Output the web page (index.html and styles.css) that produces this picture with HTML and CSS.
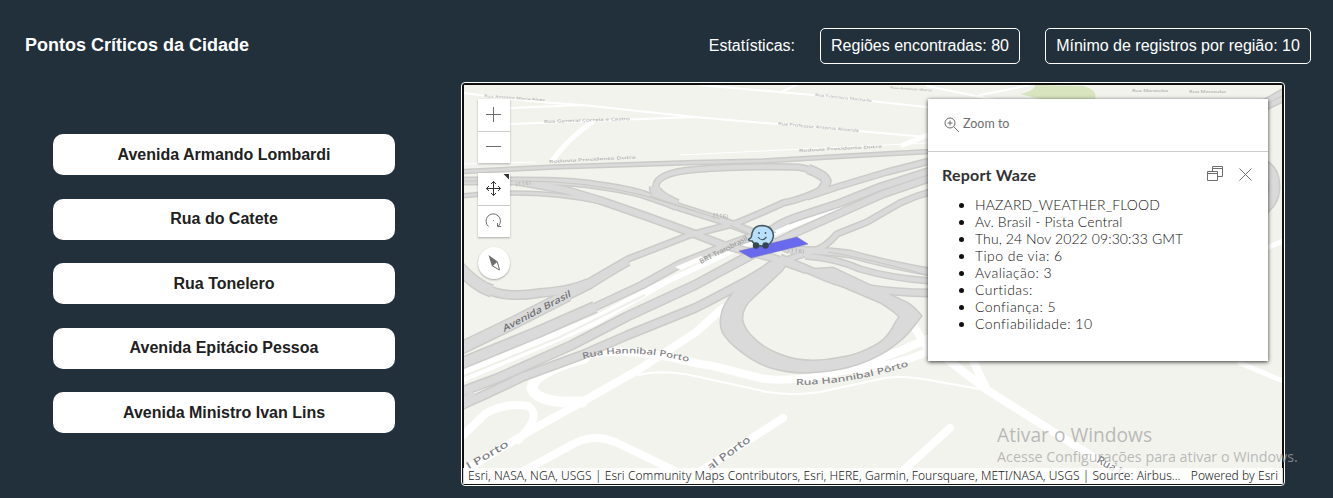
FILE: index.html
```
<!DOCTYPE html>
<html lang="pt-BR">
<head>
<meta charset="utf-8">
<title>Pontos Críticos da Cidade</title>
<link rel="stylesheet" href="styles.css">
</head>
<body>
<header class="header">
  <h1 class="title">Pontos Críticos da Cidade</h1>
  <div class="stats">
    <span class="stats-label">Estatísticas:</span>
    <span class="stat stat-regions">Regiões encontradas: 80</span>
    <span class="stat stat-min">Mínimo de registros por região: 10</span>
  </div>
</header>
<main class="main">
  <nav class="places">
    <button class="place">Avenida Armando Lombardi</button>
    <button class="place">Rua do Catete</button>
    <button class="place">Rua Tonelero</button>
    <button class="place">Avenida Epitácio Pessoa</button>
    <button class="place">Avenida Ministro Ivan Lins</button>
  </nav>
  <section class="map">
    <svg class="basemap" viewBox="464 85 818 399" preserveAspectRatio="none">
      <defs>
        <g id="highways">
          <path class="w4" d="M455 172L555 167L695 162.500L763 161L847 156L930 151.500"/>
          <path class="w7" d="M455 181L522 181Q570 181 595 185Q620 188 642 194L682 208L723 221L757 234L790 250"/>
          <path class="w7" d="M516 181Q545 186 565 190L602 201L648 217L692 233L723 245L773 258L807 270"/>
          <path class="w4" d="M455 197Q480 193 505 193Q555 192 602 202"/>
          <path class="w10" d="M677 205Q654 195 655 187"/>
          <path class="w6" d="M656 188Q654 173 695 169.500Q740 166 793 167Q805 167 814 172"/>
          <path class="w9" d="M808 169Q829 177 826 183L822 190"/>
          <path class="w6" d="M824 188Q807 198 783 203L763 212L737 223L690 235L628 259L585 284"/>
          <path class="w6" d="M807 197L837 187L887 172L930 161"/>
          <path class="w7" d="M930 171L880 187L840 203L797 217Q780 223 773 229L723 247L680 264L642 285L595 307L538 332L455 366"/>
          <path class="w10" d="M595 307L538 332L455 366"/>
          <path class="w7" d="M930 178L883 194L847 210L793 234L737 263L695 285L628 316L572 345L498 378L455 394"/>
          <path class="w9" d="M760 250L695 285L628 316L572 345L498 378L455 394"/>
          <path class="w6" d="M930 192Q915 196 900 203L867 222L837 234Q825 248 813 251L777 263"/>
          <path class="w8" d="M777 263L747 281L707 302L695 308L628 335L582 355L522 377Q490 393 455 408"/>
          <path class="w12" d="M475 395Q465 403 455 406"/>
          <path class="w12" d="M455 351L515 322L568 295"/>
          <path class="w9" d="M560 299L590 284Q605 274 628 261"/>
          <path class="w12" d="M455 263Q475 286 492 291"/>
          <path class="w8" d="M484 288Q505 299 540 293Q570 291 588 283"/>
          <path class="w7" d="M790 250Q820 250 850 254Q885 264 930 272"/>
          <path class="w6" d="M805 256Q835 258 860 269Q890 278 930 281"/>
          <path class="w7" d="M780 258Q805 268 825 277Q860 292 930 293"/>
          <path class="poly" d="M770 262Q750 277 738 287Q727 300 723 310Q719 324 723 332Q728 341 740 350Q755 362 770 367Q790 373 810 372Q830 371 847 367Q870 361 887 350Q904 338 910 330L921 316Q914 307 907 303L867 284L833 268L803 270L840 285L880 302Q895 311 900 317Q897 320 893 328Q886 341 873 347Q856 356 840 358Q826 361 813 361Q795 361 780 355Q762 348 753 338Q744 330 742 320Q741 311 748 302L782 270L790 258Z"/>
          <path class="w6" d="M1255 112L1295 93M1255 108L1295 85"/>
          <path class="w10" d="M1256 162Q1276 168 1274 190Q1273 205 1256 213"/>
        </g>
      </defs>
      <rect class="land" x="464" y="85" width="818" height="399"/>
      <path class="park" d="M1020 94Q1035 91 1035 85L1083 86Q1098 90 1095 99H1040Z"/>
      <g class="street thin">
        <path d="M464 93Q530 102 582 105L695 117L927 137M510 108L582 105M510 124L590 121L695 117M700 85L813 95L927 107M783 91L798 84M927 86L1015 104M980 95L1030 85"/>
        <path class="track" d="M638 375Q662 369 695 376L713 380L767 392Q793 396 820 392L880 379Q900 374 940 382L985 390"/>
      </g>
      <path class="street hairline" d="M464 164L535 162M680 155L927 143"/>
      <g class="street local">
        <path d="M592 122Q565 142 553 160M903 145L928 135M1240 363L1290 384M1264 249L1288 239"/>
      </g>
      <g class="street wide">
        <path d="M588 354Q632 347 695 363L713 366L760 378Q793 384 847 370L900 351L927 339M847 370Q895 367 929 351L910 320"/>
        <path class="ring" d="M584 358Q533 372 532 388Q536 404 582 402"/>
        <path d="M582 402L638 370L695 333L723 308M582 402L535 428L460 473M455 443L485 414Q505 402 528 406Q543 416 518 440M518 474L568 447Q591 432 615 442L690 478"/>
        <path d="M690 478L783 418M895 478L950 428M935 350L987 390L1133 482M968 350L987 390"/>
      </g>
      <path class="busway" d="M464 369L595 315L650 286L747 242L813 215L930 173V176L813 220L747 247L670 283L595 326L464 382Z"/>
      <path class="median" d="M464 376L560 337L645 295"/>
      <use href="#highways" class="casing"/>
      <use href="#highways" class="surface"/>
      <path class="median strong" d="M455 181H522Q585 181 642 195L720 219M730 225L760 239M828 252Q870 259 927 275M650 196L695 211"/>
      <path class="busway" d="M681 270L705 259L701 256L675 267ZM774 231L789 224L791 227L778 233Z"/>
      <polygon class="hotspot" points="739,251 797,237 808,244 751,258"/>
      <g class="labels">
        <text class="road-name" transform="translate(504 332) rotate(-28) skewX(-15)" textLength="76" lengthAdjust="spacingAndGlyphs" font-size="9">Avenida Brasil</text>
        <path id="porto1" class="guide" d="M583 359Q630 346 693 363"/>
        <text font-size="8.500"><textPath href="#porto1" textLength="107" lengthAdjust="spacingAndGlyphs">Rua Hannibal Porto</textPath></text>
        <path id="porto2" class="guide" d="M796 385Q850 385 912 365"/>
        <text font-size="8.500"><textPath href="#porto2" textLength="115" lengthAdjust="spacingAndGlyphs">Rua Hannibal Pôrto</textPath></text>
        <text transform="translate(469 470) rotate(-31)" textLength="47" lengthAdjust="spacingAndGlyphs" font-size="10">l Porto</text>
        <text transform="translate(710 471) rotate(-36)" textLength="51" lengthAdjust="spacingAndGlyphs" font-size="10.500">al Porto</text>
        <text transform="translate(1096 462) rotate(30)" font-size="11">Rua In</text>
        <text class="faint" transform="translate(701 264) rotate(-27)" textLength="53" lengthAdjust="spacingAndGlyphs" font-size="7">BRT Transbrasil</text>
        <text class="tiny" transform="translate(713 217) rotate(8)" textLength="15" font-size="6">(116)</text>
        <text class="tiny" transform="translate(788 252) rotate(5)" textLength="16" font-size="6">(116)</text>
        <text class="tiny" transform="translate(516 186) rotate(-6)" textLength="15" font-size="5">(116)</text>
        <text class="tiny" transform="translate(484 97) rotate(4)" textLength="61" lengthAdjust="spacingAndGlyphs" font-size="3.500">Rua Antonio Maria Alves</text>
        <text class="tiny" transform="translate(544 123) rotate(-2)" textLength="86" lengthAdjust="spacingAndGlyphs" font-size="4">Rua General Correia e Castro</text>
        <text class="tiny" transform="translate(549 163) rotate(-3)" textLength="87" lengthAdjust="spacingAndGlyphs" font-size="4">Rodovia Presidente Dutra</text>
        <text class="tiny" transform="translate(799 152) rotate(-3)" textLength="83" lengthAdjust="spacingAndGlyphs" font-size="4">Rodovia Presidente Dutra</text>
        <text class="tiny" transform="translate(778 125) rotate(5)" textLength="81" lengthAdjust="spacingAndGlyphs" font-size="4">Rua Professor Antonio Almeida</text>
        <text class="tiny" transform="translate(815 96) rotate(6)" textLength="57" lengthAdjust="spacingAndGlyphs" font-size="3.500">Rua Francisco Machado</text>
        <text class="tiny" transform="translate(890 88.500) rotate(4)" textLength="42" lengthAdjust="spacingAndGlyphs" font-size="3">Rua Antonio Maria</text>
        <text class="tiny" x="1132" y="92" textLength="36" lengthAdjust="spacingAndGlyphs" font-size="3.500">Rua Maratuba</text>
        <text class="tiny" x="1189" y="93" textLength="37" lengthAdjust="spacingAndGlyphs" font-size="3.500">Rua Maratuba</text>
      </g>
      <g class="waze">
        <path d="M752 241Q748 241 749 239Q752 238 752 233Q754 225.500 762 225.500Q773 226 773.500 236Q772 246 762 246Q755 246 752 241Z"/>
        <circle class="wheel" cx="756" cy="245.500" r="3.200"/><circle class="wheel" cx="765.500" cy="245.500" r="3.200"/>
        <circle class="eye" cx="759" cy="233" r=".9"/><circle class="eye" cx="765.500" cy="233" r=".9"/>
        <path class="smile" d="M758 237Q762 242.500 766.500 237"/>
      </g>
    </svg>
    <div class="controls">
      <div class="tool-group">
        <button class="tool" aria-label="Zoom in"><svg viewBox="0 0 32 32"><path d="M8 15.500H23M15.500 8V23"/></svg></button>
        <button class="tool" aria-label="Zoom out"><svg viewBox="0 0 32 32"><path d="M8 14.500H23"/></svg></button>
      </div>
      <div class="tool-group">
        <button class="tool active" aria-label="Pan"><svg viewBox="0 0 32 32"><path d="M15.500 8.500V22.500M8.500 15.500H22.500M13 11L15.500 8.500L18 11M13 20L15.500 22.500L18 20M11 13L8.500 15.500L11 18M20 13L22.500 15.500L20 18"/><path class="corner" d="M25.500 1H31V6.500Z"/></svg></button>
        <button class="tool" aria-label="Rotate"><svg viewBox="0 0 32 32"><path d="M10.500 20.500A7.200 7.200 0 1 1 20.500 20M23 20.500H19.500V17"/><circle class="dot" cx="15.500" cy="14.500" r=".6"/></svg></button>
      </div>
      <button class="compass" aria-label="Compass"><svg viewBox="0 0 32 32"><path class="needle" d="M10.500 8L19.500 14.500L17 17L14 19.500Z"/><path d="M19.300 14.700L21.500 23L14.300 18.800"/></svg></button>
    </div>
    <article class="popup">
      <div class="popup-actions">
        <svg class="zoom-icon" viewBox="0 0 16 16"><circle cx="6" cy="6" r="5"/><path d="M9.700 9.700L15 15M3.500 6H8.500M6 3.500V8.500"/></svg>
        <span class="zoom-text">Zoom to</span>
      </div>
      <div class="popup-head">
        <h2 class="popup-title">Report Waze</h2>
        <svg class="dock-icon" viewBox="0 0 16 16"><path d="M.5 5.500H10.500V14.500H.5ZM.5 7.500H10.500M5.500 5V.5H15.500V10.500H11M5.500 2.500H15.500"/></svg>
        <svg class="close-icon" viewBox="0 0 13 13"><path d="M.5 .5L12.500 12.500M12.500 .5L.5 12.500"/></svg>
      </div>
      <ul class="report">
        <li><span class="hazard">HAZARD_WEATHER_FLOOD</span></li>
        <li><span class="street-name">Av. Brasil - Pista Central</span></li>
        <li><span class="date">Thu, 24 Nov 2022 09:30:33 GMT</span></li>
        <li>Tipo de via: 6</li>
        <li>Avaliação: 3</li>
        <li>Curtidas:</li>
        <li>Confiança: 5</li>
        <li>Confiabilidade: 10</li>
      </ul>
    </article>
    <footer class="attribution">
      <span class="sources">Esri, NASA, NGA, USGS | Esri Community Maps Contributors, Esri, HERE, Garmin, Foursquare, METI/NASA, USGS | Source: Airbus…</span>
      <span class="powered">Powered by Esri</span>
    </footer>
  </section>
</main>
<aside class="watermark">
  <div class="wm-title">Ativar o Windows</div>
  <div class="wm-text">Acesse Configurações para ativar o Windows.</div>
</aside>
</body>
</html>
```
FILE: styles.css
```
* { box-sizing: border-box; }
body {
  margin: 0;
  height: 498px;
  overflow: hidden;
  position: relative;
  background: #21303b;
  color: #fff;
  font-family: "Liberation Sans", Arial, sans-serif;
}
button { font: inherit; border: 0; padding: 0; }
.header {
  height: 82px;
  padding: 28px 22px 0 25px;
  display: flex;
  justify-content: space-between;
  align-items: flex-start;
}
.title { margin: 0; font-size: 18px; line-height: 34px; font-weight: 700; }
.stats { display: flex; gap: 25px; align-items: center; font-size: 16px; }
.stat {
  height: 36px;
  line-height: 34px;
  text-align: center;
  white-space: nowrap;
  border: 1px solid #fff;
  border-radius: 5px;
}
.stat-regions { width: 200px; }
.stat-min { width: 266px; }
.main { display: flex; padding-left: 53px; }
.places {
  width: 342px;
  margin-right: 66px;
  padding-top: 52.200px;
  display: flex;
  flex-direction: column;
  gap: 23.200px;
}
.place {
  height: 41.300px;
  border-radius: 10px;
  background: #fff;
  color: #212121;
  font-size: 16px;
  font-weight: 700;
}
.map {
  position: relative;
  width: 824px;
  height: 404px;
  border: 1px solid #fff;
  border-radius: 4px;
  padding: 2px;
  background: #101010;
}
.basemap { display: block; width: 818px; height: 399px; }
.land { fill: #f2f3ed; }
.park { fill: #d8e5bf; }
.street { fill: none; stroke: #fff; stroke-linecap: round; stroke-linejoin: round; }
.thin, .track { stroke-width: 2px; }
.hairline { stroke-width: 1px; }
.local { stroke-width: 5px; }
.wide { stroke-width: 8px; }
.ring { stroke-width: 11px; }
.busway { fill: #fff; }
.median { fill: none; stroke: #f0f0ea; stroke-width: 2px; }
.strong { stroke: #c8c8c4; stroke-width: 1px; }
.casing { --edge: 1.500px; fill: none; stroke: #cbcbc9; }
.surface { --edge: -1.500px; fill: none; stroke: #dadada; }
#highways path { stroke-linejoin: round; }
#highways .w4 { stroke-width: calc(4px + var(--edge)); }
#highways .w6 { stroke-width: calc(6px + var(--edge)); }
#highways .w7 { stroke-width: calc(7.500px + var(--edge)); }
#highways .w8 { stroke-width: calc(8.500px + var(--edge)); }
#highways .w9 { stroke-width: calc(9px + var(--edge)); }
#highways .w10 { stroke-width: calc(11px + var(--edge)); }
#highways .w12 { stroke-width: calc(12px + var(--edge)); }
#highways .poly { fill: #dadada; stroke-width: calc(1.500px + var(--edge)); }
.hotspot { fill: #6969ee; stroke: #7777b5; stroke-width: .5px; }
.labels { fill: #808084; font-family: "Noto Sans", sans-serif; font-weight: 500; }
.road-name { fill: #6c6c70; }
.guide { fill: none; }
.faint { fill: #999; }
.tiny { fill: #b0b0b0; }
.waze { fill: #b8dffb; stroke: #435861; stroke-width: 1.500px; }
.wheel { fill: #34464e; stroke: none; }
.eye { fill: #435861; stroke: none; }
.smile { fill: none; stroke-width: 1.200px; }
.controls {
  position: absolute;
  left: 16px;
  top: 16px;
  display: flex;
  flex-direction: column;
  gap: 10px;
}
.tool-group { width: 32px; background: #fff; box-shadow: 0 1px 2px rgba(0,0,0,.3); }
.tool { display: block; width: 32px; height: 32px; background: none; }
.tool + .tool { border-top: 1px solid #ccc; }
.tool svg, .compass svg {
  display: block;
  width: 32px;
  height: 32px;
  fill: none;
  stroke: #6e6e6e;
  stroke-width: 1px;
}
.tool.active svg { stroke: #323232; }
.tool .corner { fill: #323232; stroke: none; }
.dot, .needle { fill: #6e6e6e; stroke: none; }
.compass {
  width: 32px;
  height: 32px;
  border-radius: 50%;
  background: #fff;
  box-shadow: 0 1px 2px rgba(0,0,0,.3);
}
.popup {
  position: absolute;
  left: 466px;
  top: 16px;
  width: 340px;
  height: 262px;
  background: #fff;
  color: #323232;
  box-shadow: 0 1px 4px rgba(0,0,0,.8);
  font-family: Lato, sans-serif;
}
.popup-actions {
  height: 53px;
  padding-left: 16px;
  display: flex;
  align-items: center;
  gap: 3px;
  border-bottom: 1px solid #ccc;
  color: #6e6e6e;
}
.popup svg { fill: none; stroke: #6e6e6e; stroke-width: 1px; }
.zoom-icon { width: 16px; height: 16px; }
.zoom-text { font-size: 12.500px; line-height: 16px; padding-bottom: 2px; }
.popup-head { height: 44px; padding: 0 16px 0 14px; display: flex; align-items: center; }
.popup-title { flex: 1; margin: 0; padding-top: 2px; font-size: 16px; letter-spacing: .2px; line-height: 20px; font-weight: 700; }
.dock-icon { width: 16px; height: 16px; margin-right: 16px; }
.close-icon { width: 13px; height: 13px; }
.report {
  margin: 0;
  padding-left: 47px;
  color: #101010;
  font-size: 14px;
  font-weight: 300;
  letter-spacing: .45px;
  line-height: 17px;
}
.hazard { letter-spacing: .15px; }
.street-name { letter-spacing: .15px; }
.date { letter-spacing: .1px; }
.attribution {
  position: absolute;
  left: 1px;
  top: 385px;
  width: 820px;
  height: 16px;
  padding: 0 5px;
  display: flex;
  justify-content: space-between;
  background: rgba(255,255,255,.8);
  color: #202020;
  font: 300 12px/16px "Noto Sans", sans-serif;
  letter-spacing: .065px;
  white-space: nowrap;
}
.watermark {
  position: absolute;
  left: 997px;
  top: 422px;
  color: rgba(165,165,165,.75);
  font-family: "Open Sans", sans-serif;
  white-space: nowrap;
}
.wm-title { font-size: 19.200px; line-height: 25px; }
.wm-text { font-size: 14.300px; line-height: 20px; }
```
